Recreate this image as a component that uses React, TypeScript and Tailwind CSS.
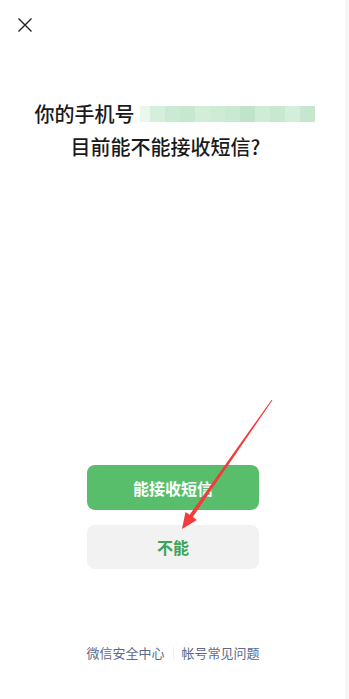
import React from "react";

const blocks = [
  "#d6efdd", "#cbead4", "#c6e8cf", "#d2eed9", "#cdebd5", "#c9e9d2",
  "#bfe4c9", "#cfecd7", "#c8e8d0", "#d3eedb", "#c6e7ce",
];

export default function App() {
  return (
    <div
      className="relative w-[349px] h-[699px] bg-white overflow-hidden flex flex-col"
      style={{ fontFamily: '"Noto Sans CJK SC", "Noto Sans", sans-serif' }}
    >
      <div className="pt-[18px] pl-[18px]">
        <svg width="14" height="14" viewBox="0 0 14 14" className="block">
          <path d="M0.5 0.5 L13.5 13.5 M13.5 0.5 L0.5 13.5" stroke="#222" strokeWidth="1.4" fill="none" />
        </svg>
      </div>

      <div className="mt-[65px] flex flex-col items-center text-[20px] leading-[33px] font-medium text-[#1a1a1a]">
        <div className="flex items-center">
          <span>你的手机号</span>
          <span className="ml-[5px] flex h-[16px] items-stretch">
            <span className="w-[10px] bg-[#eaf7ee]" />
            {blocks.map((c, i) => (
              <span key={i} className="w-[15px]" style={{ backgroundColor: c }} />
            ))}
          </span>
        </div>
        <div className="pr-[18px]">目前能不能接收短信?</div>
      </div>

      <div className="flex-1" />

      <div className="flex flex-col items-center gap-[15px] pr-[3px]">
        <div className="w-[172px] h-[45px] rounded-[8px] bg-[#58be6c] flex items-center justify-center text-white text-[16px] font-semibold">
          能接收短信
        </div>
        <div className="w-[172px] h-[44px] rounded-[8px] bg-[#f2f2f2] flex items-center justify-center text-[#3da558] text-[16px] font-semibold">
          不能
        </div>
      </div>

      <div className="mt-[74px] mb-[36px] pr-[3px] flex items-center justify-center text-[13px] leading-[20px] text-[#5d6a87]">
        <span>微信安全中心</span>
        <span className="mx-[8px] w-px h-[12px] bg-[#eeeeee]" />
        <span>帐号常见问题</span>
      </div>

      <div className="absolute top-0 right-0 w-[4px] h-full bg-[#f6f6f6]" />

      <svg className="absolute inset-0 pointer-events-none" width="349" height="699" viewBox="0 0 349 699">
        <polygon
          points="271.6,399.7 272.4,400.3 192.8,517.0 196.9,519.9 182,529 185.5,511.9 189.6,514.8"
          fill="#f23b3b"
        />
      </svg>
    </div>
  );
}
